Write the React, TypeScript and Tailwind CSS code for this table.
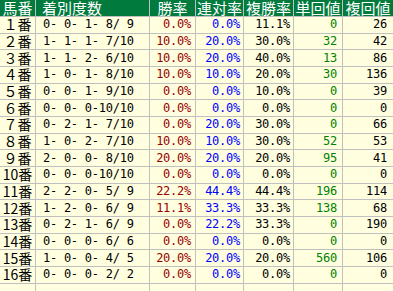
import React from "react";

type Row = [string, string, string, string, string, string, string];

const rows: Row[] = [
  ["１番", " 0- 0- 1- 8/ 9", "0.0%", "0.0%", "11.1%", "0", "26"],
  ["２番", " 1- 1- 1- 7/10", "10.0%", "20.0%", "30.0%", "32", "42"],
  ["３番", " 1- 1- 2- 6/10", "10.0%", "20.0%", "40.0%", "13", "86"],
  ["４番", " 1- 0- 1- 8/10", "10.0%", "10.0%", "20.0%", "30", "136"],
  ["５番", " 0- 0- 1- 9/10", "0.0%", "0.0%", "10.0%", "0", "39"],
  ["６番", " 0- 0- 0-10/10", "0.0%", "0.0%", "0.0%", "0", "0"],
  ["７番", " 0- 2- 1- 7/10", "0.0%", "20.0%", "30.0%", "0", "66"],
  ["８番", " 1- 0- 2- 7/10", "10.0%", "10.0%", "30.0%", "52", "53"],
  ["９番", " 2- 0- 0- 8/10", "20.0%", "20.0%", "20.0%", "95", "41"],
  ["10番", " 0- 0- 0-10/10", "0.0%", "0.0%", "0.0%", "0", "0"],
  ["11番", " 2- 2- 0- 5/ 9", "22.2%", "44.4%", "44.4%", "196", "114"],
  ["12番", " 1- 2- 0- 6/ 9", "11.1%", "33.3%", "33.3%", "138", "68"],
  ["13番", " 0- 2- 1- 6/ 9", "0.0%", "22.2%", "33.3%", "0", "190"],
  ["14番", " 0- 0- 0- 6/ 6", "0.0%", "0.0%", "0.0%", "0", "0"],
  ["15番", " 1- 0- 0- 4/ 5", "20.0%", "20.0%", "20.0%", "560", "106"],
  ["16番", " 0- 0- 0- 2/ 2", "0.0%", "0.0%", "0.0%", "0", "0"],
];

const head =
  "bg-[#007a3d] text-white text-[15px] leading-[16px] flex items-center font-['Noto_Sans_CJK_JP',sans-serif]";
const cell =
  "bg-[#ffffe0] flex items-center text-[12px] leading-[15px] whitespace-pre tracking-[-0.25px] font-['DejaVu_Sans_Mono',monospace]";

export default function App() {
  return (
    <div className="w-[393px] h-[291px] bg-[#c0c0c0] grid grid-cols-[35px_113px_45px_47px_49px_48px_50px] grid-rows-[16px_repeat(16,15.67px)_1fr] gap-px overflow-hidden">
      <div className={head + " justify-center"}>馬番</div>
      <div className={head + " pl-[6px]"}>着別度数</div>
      <div className={head + " justify-center"}>勝率</div>
      <div className={head + " justify-center"}>連対率</div>
      <div className={head + " justify-center"}>複勝率</div>
      <div className={head + " justify-center"}>単回値</div>
      <div className={head + " justify-center"}>複回値</div>
      {rows.map((r) => (
        <React.Fragment key={r[0]}>
          <div className="bg-[#ffffe0] flex items-center justify-center text-[14px] leading-[15px] text-black font-['Noto_Sans_CJK_JP',sans-serif]">
            {r[0]}
          </div>
          <div className={cell + " pl-0 text-black"}>{r[1]}</div>
          <div className={cell + " justify-end pr-[4px] text-[#990000]"}>{r[2]}</div>
          <div className={cell + " justify-end pr-[3px] text-[#0000ff]"}>{r[3]}</div>
          <div className={cell + " justify-end pr-[3px] text-black"}>{r[4]}</div>
          <div className={cell + " justify-end pr-[5px] text-[#008000]"}>{r[5]}</div>
          <div className={cell + " justify-end pr-[6px] text-black"}>{r[6]}</div>
        </React.Fragment>
      ))}
      <div className="bg-[#ffffe0]" />
      <div className="bg-[#ffffe0]" />
      <div className="bg-[#ffffe0]" />
      <div className="bg-[#ffffe0]" />
      <div className="bg-[#ffffe0]" />
      <div className="bg-[#ffffe0]" />
      <div className="bg-[#ffffe0]" />
    </div>
  );
}
